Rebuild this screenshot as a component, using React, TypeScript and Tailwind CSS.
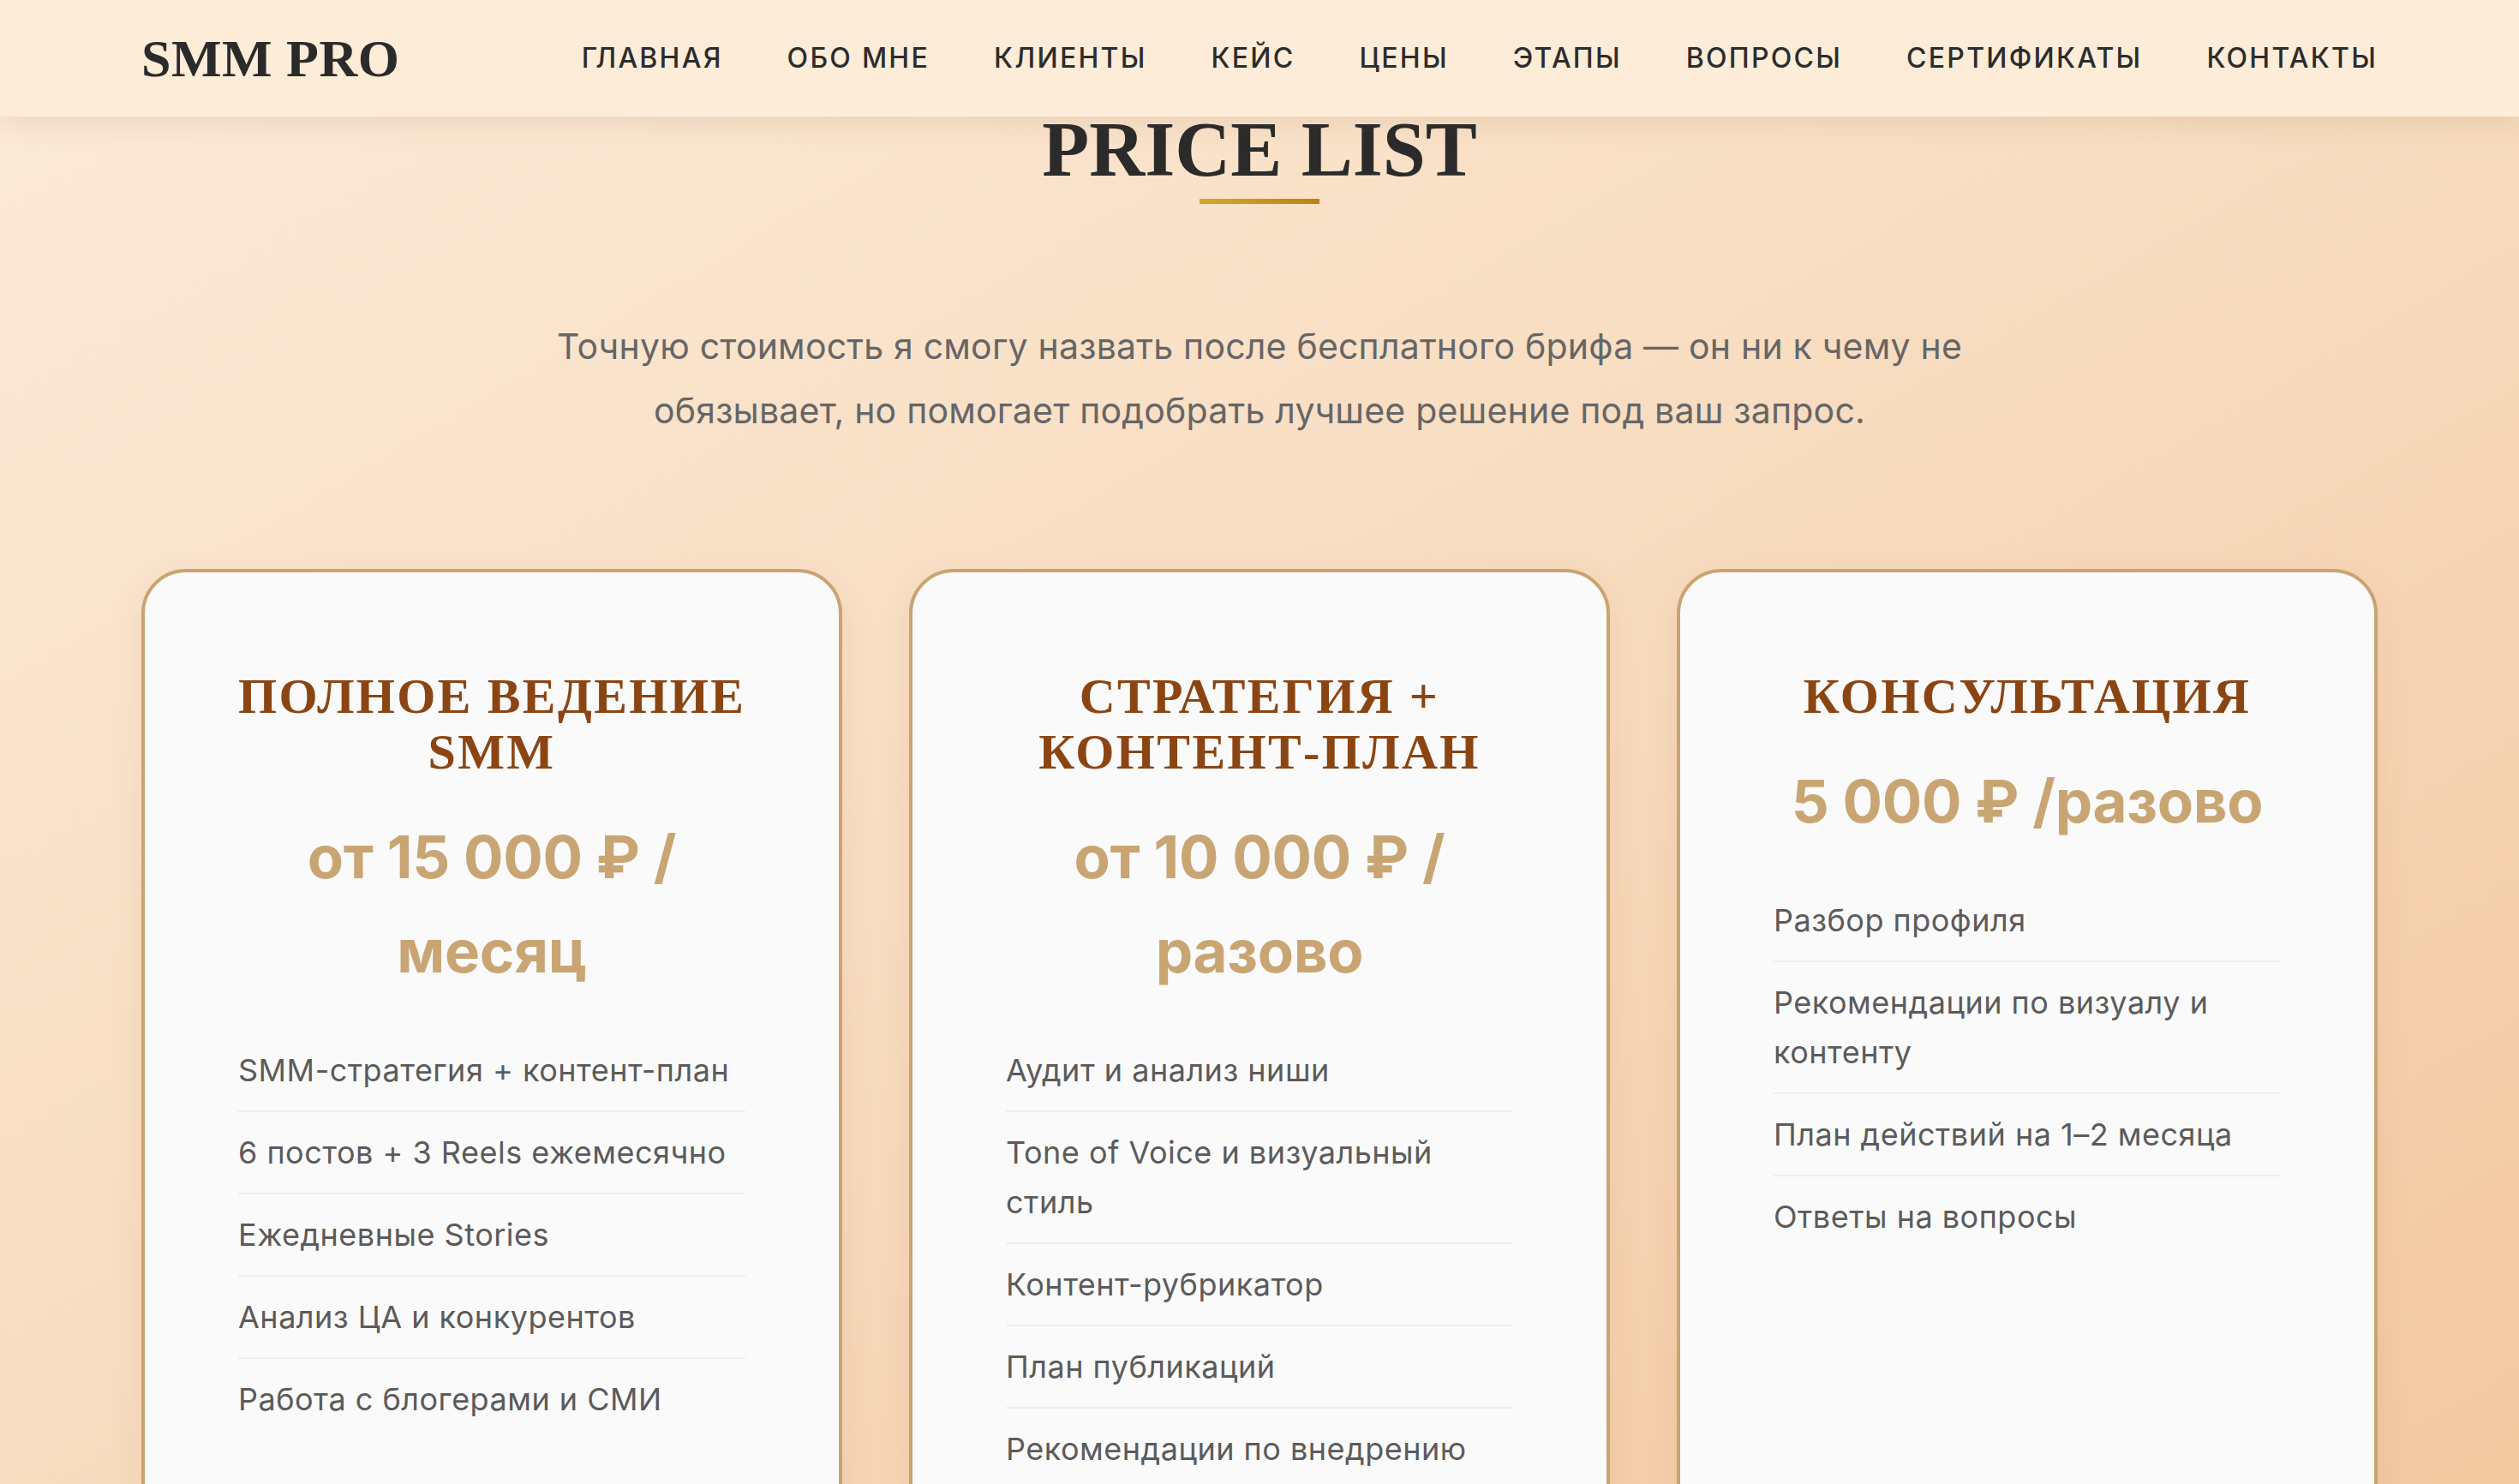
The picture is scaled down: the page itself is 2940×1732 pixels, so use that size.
const navItems = ["Главная", "Обо мне", "Клиенты", "Кейс", "Цены", "Этапы", "Вопросы", "Сертификаты", "Контакты"];

const plans = [
  {
    title: ["Полное ведение", "SMM"],
    price: "от 15 000 ₽ / месяц",
    items: [
      "SMM-стратегия + контент-план",
      "6 постов + 3 Reels ежемесячно",
      "Ежедневные Stories",
      "Анализ ЦА и конкурентов",
      "Работа с блогерами и СМИ",
    ],
  },
  {
    title: ["Стратегия +", "Контент-план"],
    price: "от 10 000 ₽ / разово",
    items: [
      "Аудит и анализ ниши",
      "Tone of Voice и визуальный стиль",
      "Контент-рубрикатор",
      "План публикаций",
      "Рекомендации по внедрению",
    ],
  },
  {
    title: ["Консультация"],
    price: "5 000 ₽ /разово",
    items: [
      "Разбор профиля",
      "Рекомендации по визуалу и контенту",
      "План действий на 1–2 месяца",
      "Ответы на вопросы",
    ],
  },
];

const serif = "font-['Liberation_Serif','Times_New_Roman',serif]";

function PlanCard({ plan }: { plan: (typeof plans)[number] }) {
  return (
    <div className="rounded-[52px] border-4 border-[#c9a471] bg-[#fafafa] px-[109px] pt-[112px] pb-[112px] shadow-[0_12px_40px_rgba(139,69,19,0.08)]">
      <h3 className={`${serif} text-center text-[58px] font-bold uppercase leading-[65px] tracking-[2.4px] text-[#8b4513]`}>
        {plan.title.map((line, i) => (
          <span key={i} className="block whitespace-nowrap">
            {line}
          </span>
        ))}
      </h3>
      <div className="mt-[35px] mb-[37px] text-center text-[69px] font-bold leading-[110px] tracking-[-0.3px] text-[#c9a574]">
        {plan.price}
      </div>
      <ul>
        {plan.items.map((item) => (
          <li
            key={item}
            className="border-b-2 border-[#eeeeee] py-[18px] text-[36px] leading-[58px] tracking-[0.5px] text-[#5b5b5b] last:border-b-0"
          >
            {item}
          </li>
        ))}
      </ul>
    </div>
  );
}

export default function App() {
  return (
    <div className="h-[1732px] overflow-hidden bg-gradient-to-br from-[#fcebd7] via-[#f8dcc0] to-[#f2c8a0] font-['Inter','Liberation_Sans',sans-serif]">
      <header className="relative z-10 flex h-[136px] items-center justify-between bg-[#fdecd8] px-[165px] shadow-[0_8px_30px_rgba(120,80,40,0.12)]">
        <div className={`${serif} text-[62px] font-bold leading-none tracking-[0.5px] text-[#2b2b2b]`}>SMM PRO</div>
        <nav className="flex gap-[75px]">
          {navItems.map((item) => (
            <a key={item} className="text-[32px] font-medium uppercase tracking-[2.25px] text-[#2c2c2c]">
              {item}
            </a>
          ))}
        </nav>
      </header>

      <section className="flex flex-col items-center">
        <h2 className={`${serif} mt-[-6px] text-[90px] font-bold uppercase leading-none text-[#2b2b2b]`}>
          Price List
        </h2>
        <div className="mt-[12px] h-[6px] w-[140px] bg-gradient-to-r from-[#d4a72c] to-[#b8860b]" />

        <p className="mt-[129px] max-w-[1700px] text-center text-[41px] leading-[75px] tracking-[0.2px] text-[#666666]">
          Точную стоимость я смогу назвать после бесплатного брифа — он ни к чему не обязывает, но помогает
          подобрать лучшее решение под ваш запрос.
        </p>

        <div className="mt-[147px] grid w-full grid-cols-3 gap-[78px] px-[165px]">
          {plans.map((plan) => (
            <PlanCard key={plan.price} plan={plan} />
          ))}
        </div>
      </section>
    </div>
  );
}
